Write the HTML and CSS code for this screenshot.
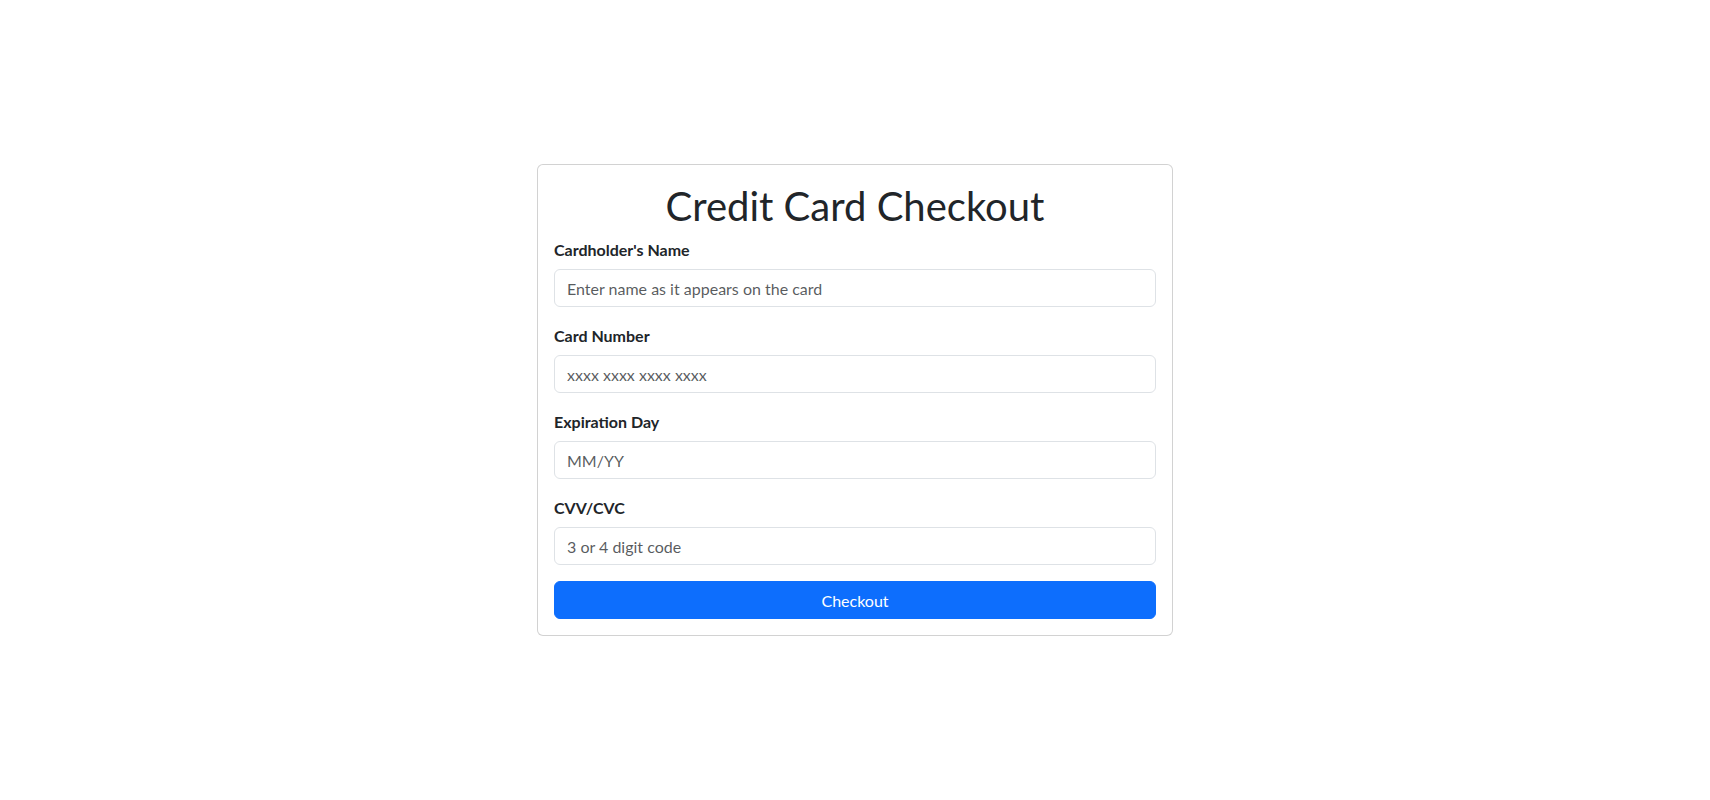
FILE: index.html
```html
<!DOCTYPE html>
<html lang="en">
<head>
<meta charset="utf-8">
<title>Credit Card Checkout</title>
<link rel="stylesheet" href="styles.css">
</head>
<body>
<main class="page">
  <form class="card">
    <h1 class="card-title">Credit Card Checkout</h1>
    <div class="field">
      <label class="field-label" for="name">Cardholder's Name</label>
      <input class="field-input" id="name" type="text" placeholder="Enter name as it appears on the card">
    </div>
    <div class="field">
      <label class="field-label" for="number">Card Number</label>
      <input class="field-input" id="number" type="text" placeholder="xxxx xxxx xxxx xxxx">
    </div>
    <div class="field">
      <label class="field-label" for="exp">Expiration Day</label>
      <input class="field-input" id="exp" type="text" placeholder="MM/YY">
    </div>
    <div class="field">
      <label class="field-label" for="cvv">CVV/CVC</label>
      <input class="field-input" id="cvv" type="text" placeholder="3 or 4 digit code">
    </div>
    <button class="checkout-btn" type="button">Checkout</button>
  </form>
</main>
</body>
</html>
```
FILE: styles.css
```css
* { box-sizing: border-box; }
html, body { margin: 0; padding: 0; }
body {
  font-family: "Lato", "Liberation Sans", sans-serif;
  font-size: 16px;
  line-height: 1.5;
  color: #212529;
  background: #fff;
}
.page {
  min-height: 100vh;
  display: flex;
  align-items: center;
  justify-content: center;
}
.card {
  width: 636px;
  display: flex;
  flex-direction: column;
  padding: 16px;
  border: 1px solid rgba(0, 0, 0, 0.175);
  border-radius: 6px;
  background: #fff;
}
.card-title {
  margin: 0 0 8px;
  padding-top: 2px;
  font-size: 40px;
  font-weight: 400;
  line-height: 46px;
  text-align: center;
  color: #212529;
}
.field {
  display: flex;
  flex-direction: column;
  margin-bottom: 16px;
}
.field-label {
  font-weight: 700;
  padding-top: 1px;
  line-height: 23px;
  margin-bottom: 8px;
}
.field-input {
  height: 38px;
  padding: 6px 12px;
  font: inherit;
  font-size: 16px;
  line-height: 24px;
  color: #212529;
  border: 1px solid #dee2e6;
  border-radius: 6px;
  background: #fff;
  outline: none;
}
.field-input::placeholder {
  color: rgba(33, 37, 41, 0.75);
  opacity: 1;
}
.checkout-btn {
  height: 38px;
  padding: 7px 12px 5px;
  font: inherit;
  font-size: 16px;
  line-height: 24px;
  color: #fff;
  background: #0d6efd;
  border: 1px solid #0d6efd;
  border-radius: 6px;
  cursor: pointer;
}
```
